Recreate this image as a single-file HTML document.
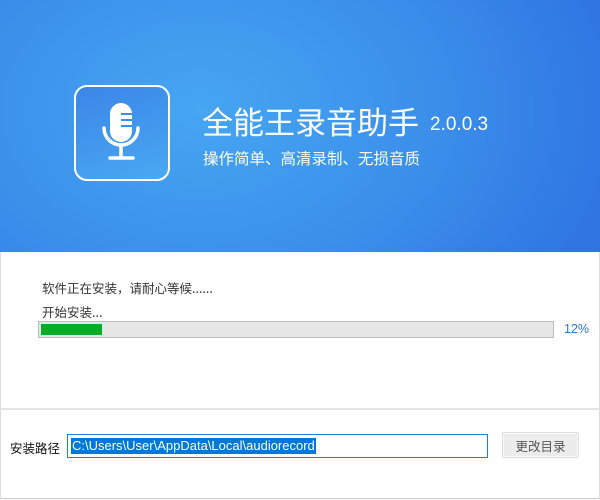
<!DOCTYPE html>
<html><head><meta charset="utf-8"><style>
*{margin:0;padding:0;box-sizing:border-box}
body{width:600px;height:500px;overflow:hidden;background:#fff;font-family:"Liberation Sans","Microsoft YaHei","Noto Sans CJK SC",sans-serif;position:relative}
.hdr{position:absolute;left:0;top:0;width:600px;height:252px;background:radial-gradient(ellipse 420px 300px at 200px 110px,#46a6f2 0%,#3b8fea 55%,#2f76e3 100%)}
.icon{position:absolute;left:74px;top:85px;width:96px;height:96px;border:2px solid #fff;border-radius:13px;background:linear-gradient(160deg,#3a86e8,#4aa8f2)}
.t1{position:absolute;left:202px;top:100px;color:#fff;font-size:31px;font-family:"Noto Sans CJK SC",sans-serif;white-space:nowrap;line-height:42px}
.ver{position:absolute;left:430px;top:113px;color:#fff;font-size:19px;line-height:24px}
.t2{position:absolute;left:203px;top:147px;color:#fff;font-size:15.5px;font-family:"Noto Sans CJK SC",sans-serif;line-height:22px;white-space:nowrap}
.body{position:absolute;left:0;top:252px;width:600px;height:157px;border-left:1px solid #ddd;border-right:1px solid #ddd}
.txt{position:absolute;font-size:12.5px;color:#333;font-family:"Noto Sans CJK SC",sans-serif;white-space:nowrap;line-height:18px}
.bar{position:absolute;left:38px;top:321px;width:516px;height:17px;background:#e6e6e6;border:1px solid #bcbcbc}
.fill{position:absolute;left:2px;top:2px;width:61px;height:11px;background:#05ad26}
.pct{position:absolute;left:564px;top:322px;font-size:12.5px;color:#2a78d4}
.bot{position:absolute;left:0;top:408px;width:600px;height:91px;border-top:2px solid #e4e4e4;border-left:1px solid #ddd;border-right:1px solid #ddd;border-bottom:1px solid #ccc}
.inp{position:absolute;left:67px;top:434px;width:421px;height:24px;border:1px solid #1a7fe0;background:#fff}
.sel{position:absolute;left:3px;top:3px;height:16px;background:#0078d7;color:#fff;font-size:13px;line-height:16px;padding:0 1px;white-space:nowrap}
.btn{position:absolute;left:502px;top:432px;width:77px;height:26px;background:#ececec;border:1px solid #ddd;border-radius:2px;box-shadow:inset 0 0 0 1px #fafafa}
.btn span{position:absolute;left:0;right:0;top:3px;text-align:center;font-size:12.5px;color:#555;font-family:"Noto Sans CJK SC",sans-serif}
</style></head><body>
<div class="hdr"></div>
<div class="icon"></div>
<svg style="position:absolute;left:0;top:0" width="600" height="252">
<rect x="110" y="103" width="22" height="39" rx="11" fill="#fff"/>
<line x1="121" y1="114" x2="132" y2="114" stroke="#3c8ce9" stroke-width="2"/>
<line x1="121" y1="120" x2="132" y2="120" stroke="#3c8ce9" stroke-width="2"/>
<line x1="121" y1="126" x2="132" y2="126" stroke="#3c8ce9" stroke-width="2"/>
<path d="M104 128 A17 17 0 0 0 138 128" fill="none" stroke="#fff" stroke-width="3.5" stroke-linecap="round"/>
<line x1="121" y1="145" x2="121" y2="158" stroke="#fff" stroke-width="3.5"/>
<line x1="110" y1="158" x2="133" y2="158" stroke="#fff" stroke-width="3.5" stroke-linecap="round"/>
</svg>
<div class="t1">全能王录音助手</div>
<div class="ver">2.0.0.3</div>
<div class="t2">操作简单、高清录制、无损音质</div>
<div class="body"></div>
<div class="txt" style="left:42px;top:279px">软件正在安装，请耐心等候......</div>
<div class="txt" style="left:42px;top:303px">开始安装...</div>
<div class="bar"><div class="fill"></div></div>
<div class="pct">12%</div>
<div class="bot"></div>
<div class="txt" style="left:10px;top:439px;color:#111">安装路径</div>
<div class="inp"><div class="sel">C:\Users\User\AppData\Local\audiorecord</div></div>
<div class="btn"><span>更改目录</span></div>
</body></html>
